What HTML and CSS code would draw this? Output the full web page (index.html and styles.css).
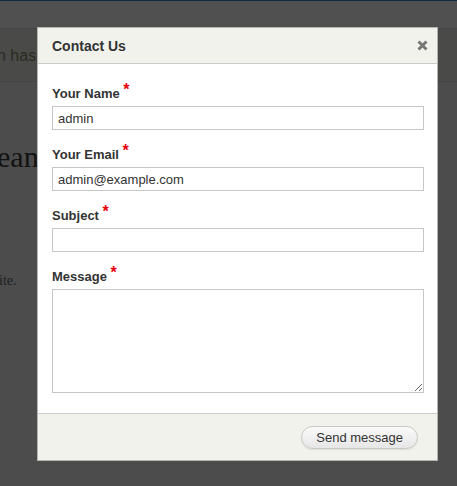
FILE: index.html
```html
<!DOCTYPE html>
<html>
<head>
<meta charset="utf-8">
<link rel="stylesheet" href="styles.css">
</head>
<body>
<div class="page">
  <div class="topline"></div>
  <div class="toolbar"></div>
  <div class="status"><span class="status-text">n has been sent.</span></div>
  <div class="content">
    <div class="big">ean</div>
    <div class="small">ite.</div>
  </div>
</div>

<div class="dialog">
  <div class="dlg-head">
    <span class="dlg-title">Contact Us</span>
    <svg class="dlg-close" width="11" height="11" viewBox="0 0 11 11"><path d="M1.5 1.5 L9.5 9.5 M9.5 1.5 L1.5 9.5" stroke="#777" stroke-width="3" stroke-linecap="butt"/></svg>
  </div>
  <div class="dlg-body">
    <div class="field">
      <label class="lbl">Your Name <span class="req">*</span></label>
      <input class="inp" type="text" value="admin">
    </div>
    <div class="field">
      <label class="lbl">Your Email <span class="req">*</span></label>
      <input class="inp" type="text" value="admin@example.com">
    </div>
    <div class="field">
      <label class="lbl">Subject <span class="req">*</span></label>
      <input class="inp" type="text" value="">
    </div>
    <div class="field">
      <label class="lbl">Message <span class="req">*</span></label>
      <textarea class="ta"></textarea>
    </div>
  </div>
  <div class="dlg-foot">
    <button class="btn">Send message</button>
  </div>
</div>
</body>
</html>
```
FILE: styles.css
```css
html, body {
  margin: 0;
  padding: 0;
  background: #4c4c4c;
  height: 100%;
  overflow: hidden;
}
.page {
  font-family: "Liberation Sans", Arial, sans-serif;
}
.topline {
  height: 1px;
  background: #0f2c46;
}
.toolbar {
  height: 27px;
  background: #505050;
  border-bottom: 1px solid #454545;
}
.status {
  height: 52px;
  background: #4a4a48;
  border-bottom: 1px solid #444;
  display: flex;
  align-items: center;
}
.status-text {
  font-size: 16px;
  color: #2a2a22;
  margin-left: -3px;
  margin-top: 2px;
}
.content {
  padding-top: 58px;
}
.big {
  font-family: "Liberation Serif", "Times New Roman", serif;
  font-size: 30px;
  color: #121212;
  margin-left: -3px;
  line-height: 34px;
}
.small {
  font-family: "Liberation Serif", "Times New Roman", serif;
  font-size: 14px;
  color: #1e1e1e;
  margin-top: 99px;
  margin-left: -1px;
}
.dialog {
  position: absolute;
  left: 37px;
  top: 27px;
  width: 401px;
  box-sizing: border-box;
  border: 1px solid #b4b4b0;
  background: #fff;
  font-family: "Liberation Sans", Arial, sans-serif;
  color: #333;
}
.dlg-head {
  height: 35px;
  background: #f2f2ed;
  border-bottom: 1px solid #cccccc;
  display: flex;
  align-items: center;
  justify-content: space-between;
  padding: 0 9px 0 14px;
}
.dlg-title {
  font-weight: bold;
  font-size: 14px;
  color: #333;
}
.dlg-close {
  display: block;
}
.dlg-body {
  padding: 19px 13px 20px 14px;
  display: flex;
  flex-direction: column;
  gap: 14px;
}
.field {
  display: flex;
  flex-direction: column;
  gap: 3px;
}
.lbl {
  font-weight: bold;
  font-size: 13px;
  line-height: 18px;
  height: 18px;
  padding-top: 2px;
  color: #333;
}
.req {
  color: #e5000b;
  font-size: 16px;
  line-height: 0;
  position: relative;
  top: -3px;
}
.inp {
  box-sizing: border-box;
  height: 24px;
  width: 100%;
  border: 1px solid #c6c6c6;
  padding: 0 5px;
  font-family: "Liberation Sans", Arial, sans-serif;
  font-size: 13px;
  color: #333;
  margin: 0;
  outline: none;
  display: block;
}
.ta {
  box-sizing: border-box;
  height: 104px;
  width: 100%;
  border: 1px solid #c6c6c6;
  margin: 0;
  font-family: "Liberation Sans", Arial, sans-serif;
  font-size: 13px;
  display: block;
}
.dlg-foot {
  height: 46px;
  background: #f2f2ed;
  border-top: 1px solid #cccccc;
  display: flex;
  align-items: center;
  justify-content: flex-end;
  padding: 0 19px 0 0;
}
.btn {
  height: 23px;
  padding: 0 14px;
  border: 1px solid #c8c8c4;
  border-radius: 12px;
  background: linear-gradient(#fafafa, #e6e6e6);
  font-family: "Liberation Sans", Arial, sans-serif;
  font-size: 13px;
  color: #333;
  box-shadow: 0 1px 1px rgba(0,0,0,0.08);
}
```
